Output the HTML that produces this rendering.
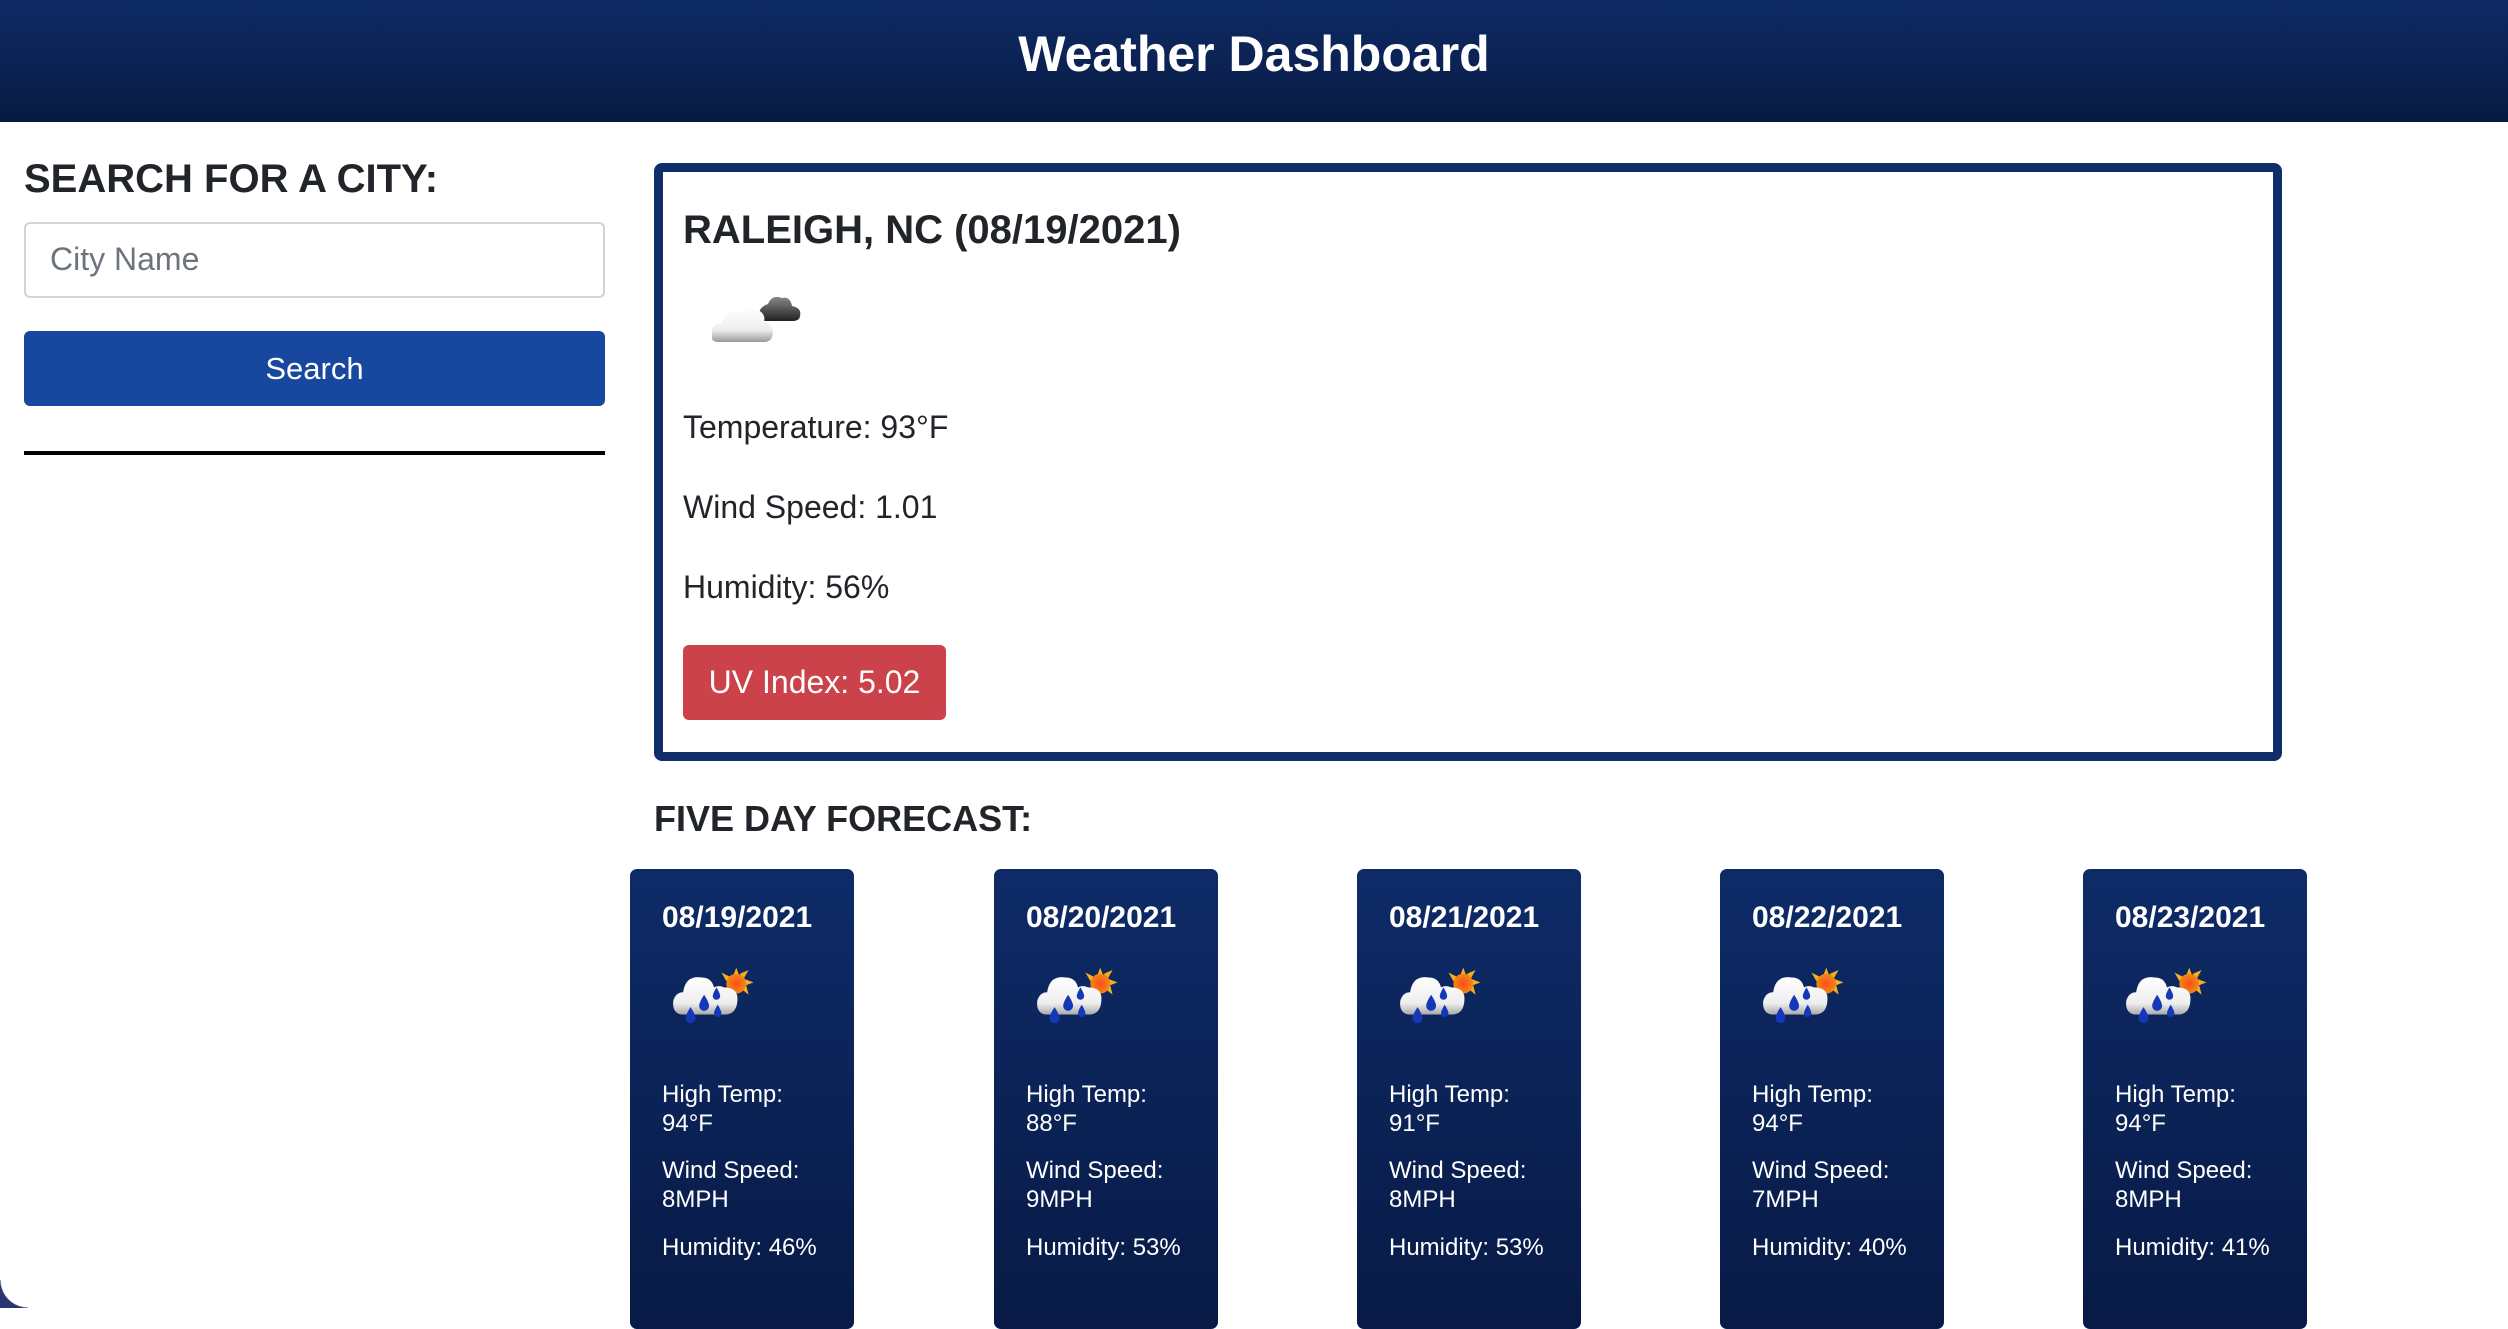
<!DOCTYPE html>
<html><head><meta charset="utf-8"><style>
*{margin:0;padding:0;box-sizing:border-box}
html,body{width:2508px;height:1308px;overflow:hidden;background:#fff;font-family:"Liberation Sans",Arial,sans-serif;color:#212529}
.abs{position:absolute}
header{position:absolute;left:0;top:0;width:2508px;height:122px;background:linear-gradient(#0e2b66,#081a42);}
header h1{position:absolute;left:0;width:100%;top:24px;text-align:center;color:#fff;font-size:50px;font-weight:bold;line-height:60px}
.lbl{font-size:32px;line-height:38px;white-space:nowrap}
.card{position:absolute;top:869px;width:224px;height:460px;border-radius:7px;background:linear-gradient(#0e2b68,#081a45);color:#fff}
.card .d{position:absolute;left:32px;font-size:30px;font-weight:bold}
.card p{position:absolute;left:32px;font-size:24px;line-height:29px;white-space:nowrap}
</style></head><body>
<header><h1>Weather Dashboard</h1></header>

<div class="abs" style="left:24px;top:156px;font-size:40px;font-weight:bold;line-height:46px;white-space:nowrap">SEARCH FOR A CITY:</div>
<div class="abs" style="left:24px;top:222px;width:581px;height:76px;border:2px solid #ced4da;border-radius:6px"></div>
<div class="abs" style="left:50px;top:240px;font-size:32px;line-height:38px;color:#6c757d">City Name</div>
<div class="abs" style="left:24px;top:331px;width:581px;height:75px;border-radius:6px;background:#17479e;color:#fff;font-size:31px;line-height:75px;text-align:center">Search</div>
<div class="abs" style="left:24px;top:451px;width:581px;height:4px;background:#000"></div>

<div class="abs" style="left:654px;top:163px;width:1628px;height:598px;border:9px solid #0f2d6b;border-radius:8px"></div>
<div class="abs" style="left:683px;top:206px;font-size:40px;font-weight:bold;line-height:48px;white-space:nowrap">RALEIGH, NC (08/19/2021)</div>
<svg class="abs" style="left:712px;top:288px" width="92" height="60" viewBox="0 0 92 60">
<defs><linearGradient id="wc" x1="0" y1="0" x2="0" y2="1"><stop offset="0" stop-color="#fff"/><stop offset=".65" stop-color="#eee"/><stop offset="1" stop-color="#999"/></linearGradient>
<linearGradient id="dc" x1="0" y1="0" x2="0" y2="1"><stop offset="0" stop-color="#888"/><stop offset="1" stop-color="#222"/></linearGradient></defs>
<path d="M48 32 q-4-12 8-16 q4-10 14-6 q8-2 10 8 q10 2 8 10 q0 4-6 5 h-30 z" fill="url(#dc)"/>
<path d="M6 54 q-8 0-7-10 q2-9 11-9 q4-14 20-11 q6-8 16-2 q8 4 6 12 q9 2 9 11 q-1 9-9 9 z" fill="url(#wc)"/>
</svg>
<div class="abs lbl" style="left:683px;top:408px">Temperature: 93°F</div>
<div class="abs lbl" style="left:683px;top:488px">Wind Speed: 1.01</div>
<div class="abs lbl" style="left:683px;top:568px">Humidity: 56%</div>
<div class="abs" style="left:683px;top:645px;width:263px;height:75px;border-radius:6px;background:#cc424a;color:#fff;font-size:32px;line-height:75px;text-align:center">UV Index: 5.02</div>

<div class="abs" style="left:654px;top:798px;font-size:36px;font-weight:bold;line-height:42px;white-space:nowrap">FIVE DAY FORECAST:</div>

<svg width="0" height="0" style="position:absolute"><defs>
<linearGradient id="cw" x1="0" y1="0" x2="0" y2="1"><stop offset="0" stop-color="#fff"/><stop offset=".7" stop-color="#eee"/><stop offset="1" stop-color="#aaa"/></linearGradient>
<radialGradient id="sn"><stop offset="0" stop-color="#ff4a20"/><stop offset="1" stop-color="#f08a10"/></radialGradient>
<g id="ic">
<g fill="#f5b020"><polygon points="52,2 55,10 49,10"/><polygon points="66,14 58,17 58,11"/><polygon points="62,4 58,11 55,7"/><polygon points="40,6 48,10 44,13"/><polygon points="62,24 56,19 60,16"/></g>
<circle cx="52" cy="15" r="8" fill="url(#sn)"/>
<path d="M8 40 q-8-1-7-11 q2-7 8-7 q2-14 15-12 q8 0 10 8 q4-2 8 0 q11 0 11 9 q0 12-9 13 z" fill="url(#cw)"/>
<g fill="#1438b8"><path d="M15 34 q4 6 4 9 a4 4 0 0 1-8 0 q0-3 4-9z"/><path d="M26 24 q4 6 4 9 a4 4 0 0 1-8 0 q0-3 4-9z"/><path d="M36 18 q3 5 3 7 a3 3 0 0 1-6 0 q0-2 3-7z"/><path d="M37 32 q3 5 3 7 a3 3 0 0 1-6 0 q0-2 3-7z"/></g>
</g></defs></svg>

<div class="card" style="left:630px"><div class="d" style="top:32px">08/19/2021</div><svg style="position:absolute;left:42px;top:94px" width="84" height="66" viewBox="0 0 68 50"><use href="#ic"/></svg><p style="top:211px">High Temp:<br>94°F</p><p style="top:287px">Wind Speed:<br>8MPH</p><p style="top:364px">Humidity: 46%</p></div>
<div class="card" style="left:994px"><div class="d" style="top:32px">08/20/2021</div><svg style="position:absolute;left:42px;top:94px" width="84" height="66" viewBox="0 0 68 50"><use href="#ic"/></svg><p style="top:211px">High Temp:<br>88°F</p><p style="top:287px">Wind Speed:<br>9MPH</p><p style="top:364px">Humidity: 53%</p></div>
<div class="card" style="left:1357px"><div class="d" style="top:32px">08/21/2021</div><svg style="position:absolute;left:42px;top:94px" width="84" height="66" viewBox="0 0 68 50"><use href="#ic"/></svg><p style="top:211px">High Temp:<br>91°F</p><p style="top:287px">Wind Speed:<br>8MPH</p><p style="top:364px">Humidity: 53%</p></div>
<div class="card" style="left:1720px"><div class="d" style="top:32px">08/22/2021</div><svg style="position:absolute;left:42px;top:94px" width="84" height="66" viewBox="0 0 68 50"><use href="#ic"/></svg><p style="top:211px">High Temp:<br>94°F</p><p style="top:287px">Wind Speed:<br>7MPH</p><p style="top:364px">Humidity: 40%</p></div>
<div class="card" style="left:2083px"><div class="d" style="top:32px">08/23/2021</div><svg style="position:absolute;left:42px;top:94px" width="84" height="66" viewBox="0 0 68 50"><use href="#ic"/></svg><p style="top:211px">High Temp:<br>94°F</p><p style="top:287px">Wind Speed:<br>8MPH</p><p style="top:364px">Humidity: 41%</p></div>

<div class="abs" style="left:0;top:1280px;width:28px;height:28px;background:radial-gradient(circle at 28px 0,transparent 27px,#2a3470 28px)"></div>
</body></html>
